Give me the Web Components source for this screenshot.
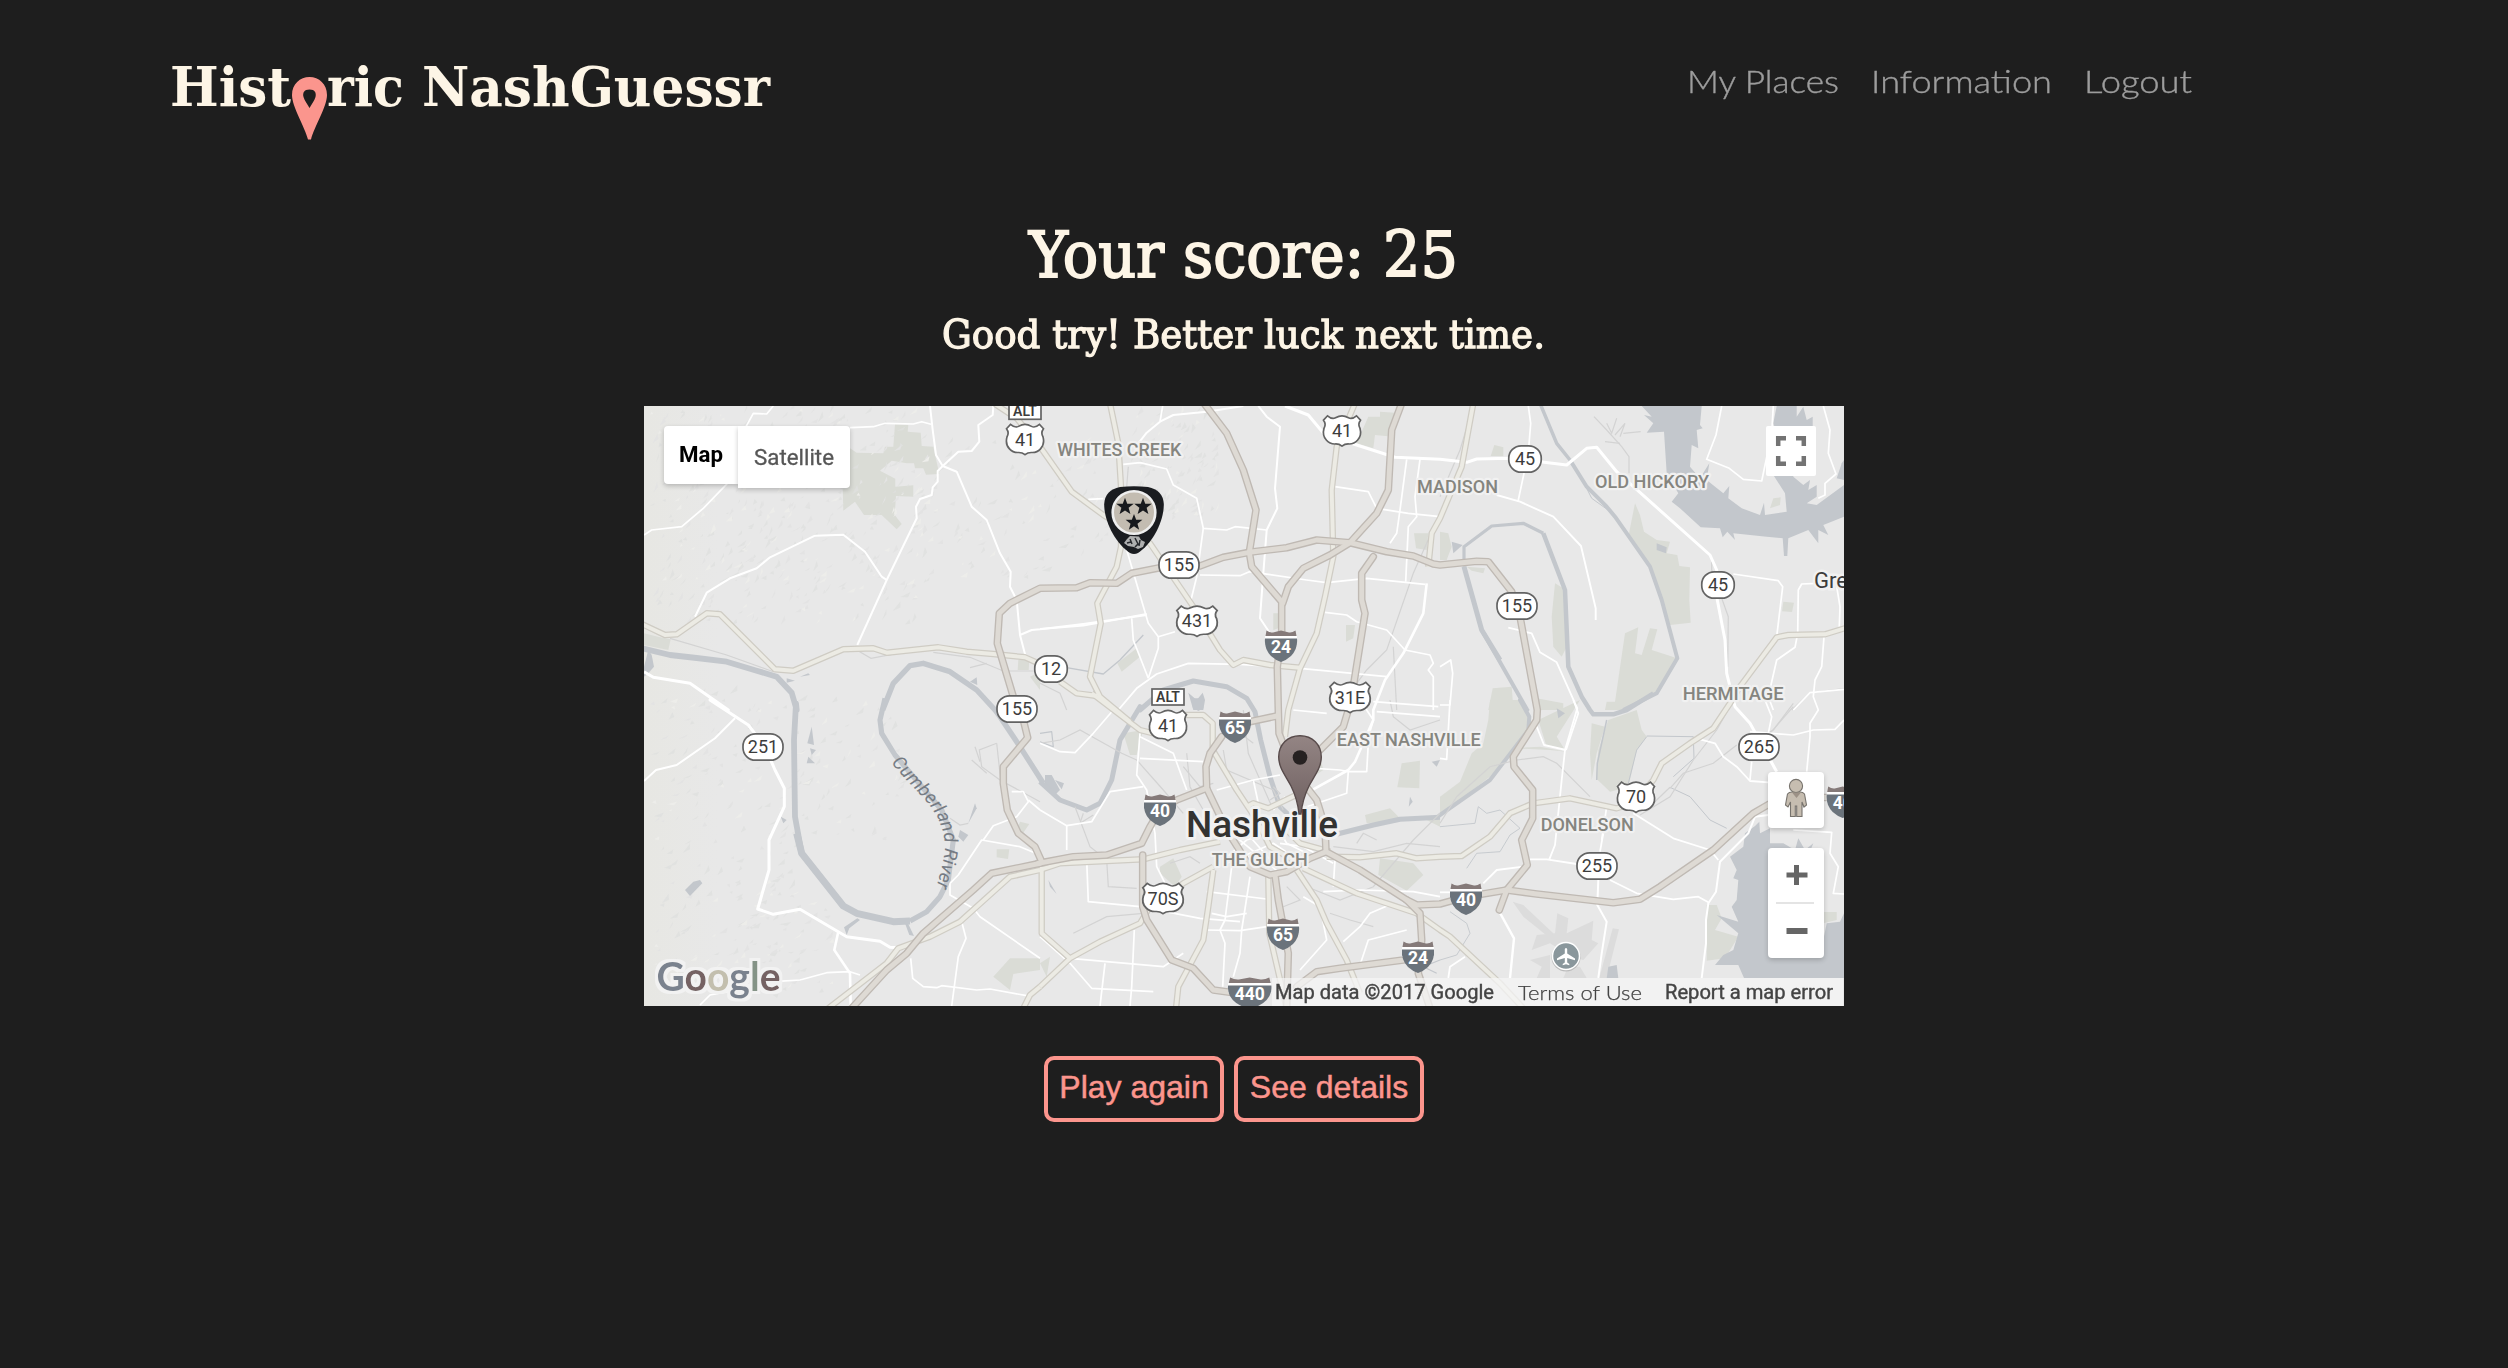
<!DOCTYPE html>
<html lang="en">
<head>
<meta charset="utf-8">
<title>Historic NashGuessr</title>
<style>
html,body{margin:0;background:#1e1e1e;}
body{height:1368px;overflow:hidden;font-family:Roboto,"Liberation Sans",sans-serif;}
</style>
</head>
<body>
<nash-app></nash-app>
<script>
/* ---------- text line scaled horizontally to a given measure ---------- */
class FitLine extends HTMLElement{
  connectedCallback(){
    const w=+this.getAttribute('w');
    const r=this.attachShadow({mode:'open'});
    r.innerHTML=`<style>:host{display:block;width:${w}px;white-space:nowrap;flex:none}span{display:inline-block;transform-origin:0 50%}</style><span><slot></slot></span>`;
    const s=r.querySelector('span');
    const m=s.getBoundingClientRect().width;
    if(m)s.style.transform=`scaleX(${w/m})`;
  }
}

class SiteLogo extends HTMLElement{
  connectedCallback(){
    this.attachShadow({mode:'open'}).innerHTML=`<style>
    :host{display:flex;height:90px;color:#fdf5e6;font:700 54.500px/60px "DejaVu Serif",serif}
    svg{flex:none;width:35px;height:63px;margin:20px 0 0 1px}
    .gap{margin-left:18px}</style>
    <fit-line w="121">Hist</fit-line>
    <svg viewBox="0 0 35 63"><path fill="#fb958d" fill-rule="evenodd" d="M17.5 0C27 0 35 7 35 18C35 30 22 50 19 62.500H16C13 50 0 30 0 18C0 7 8 0 17.500 0ZM17.500 12.500C12 12.500 10.500 16 11.500 20C12.500 24 15.500 27 17.500 31C19.500 27 22.500 24 23.500 20C24.500 16 23 12.500 17.500 12.500Z"/></svg>
    <fit-line w="77">ric</fit-line><fit-line class="gap" w="348">NashGuessr</fit-line>`;
  }
}

class SiteNav extends HTMLElement{
  connectedCallback(){
    this.attachShadow({mode:'open'}).innerHTML=`<style>
    :host{display:flex;gap:32px;color:#9d9d9d;font:300 32px/40px Lato,sans-serif;margin-top:4px;-webkit-text-stroke:.4px #9d9d9d}</style>
    <fit-line w="152">My Places</fit-line><fit-line w="181">Information</fit-line><fit-line w="108">Logout</fit-line>`;
  }
}

class ActionButton extends HTMLElement{
  connectedCallback(){
    this.attachShadow({mode:'open'}).innerHTML=`<style>
    :host{display:block}
    button{display:block;width:100%;height:66px;margin:0;padding:0 0 5px;border:4px solid #fc958d;border-radius:10px;background:transparent;color:#fc958d;font:400 32px/50px "Liberation Sans",sans-serif;-webkit-text-stroke:.5px #fc958d}</style>
    <button><slot></slot></button>`;
  }
}

/* ---------- map drawing ---------- */
/* Survey sheets: points are given in thirds of a pixel, relative to a sheet origin. */
const SHEET={A:[640,400],B:[1040,400],C:[1440,400],D:[640,700],E:[1040,700],F:[1440,700]};
function pts(s){
  let o=SHEET.A;const out=[];
  for(const t of s.trim().split(/\s+/)){
    if(SHEET[t]){o=SHEET[t];continue}
    const [x,y]=t.split(',').map(Number);
    out.push([+(o[0]+x/3).toFixed(1),+(o[1]+y/3).toFixed(1)]);
  }
  return out;
}
const dOf=(s,close)=>'M'+pts(s).map(p=>p.join(' ')).join('L')+(close?'Z':'');
const at=s=>pts(s)[0];

const PARKS=[
'A 765,73 805,75 803,95 842,98 845,138 880,140 898,222 858,224 850,205 825,205 822,190 800,190 755,182 720,212 766,236 766,260 820,256 820,290 768,288 764,345 785,372 770,388 725,345 672,345 645,305 610,332 608,260 628,225 630,145 650,158 730,160 735,140 760,140',
'A 12,700 60,712 92,718 85,750 12,735',
'B 985,50 1020,50 1020,35 1065,38 1060,110 1005,105 1000,145 950,130',
'B 918,675 945,675 940,715 918,725',
'B 700,640 715,640 715,685 700,690',
'B 232,790 290,745 300,770 245,815','B 1122,400 1165,400 1160,450 1128,445',
'C 163,135 190,142 190,168 152,168','C 0,395 25,400 35,440 20,480 0,480',
'C 585,310 600,345 612,395 650,420 690,425 680,460 712,465 718,498 750,502 748,600 752,668 690,675 660,590 632,498 565,410',
'C 555,700 595,682 585,760 605,765 630,685 652,688 635,750 712,775 650,880 550,930 495,930 500,905 525,905',
'C 345,550 370,565 380,740 365,770 340,740 335,650','C 80,500 135,505 130,520 95,512',
'C 158,865 215,860 218,900 270,930 145,930','C 290,895 370,910 370,930 290,930',
'C 1000,295 1022,292 1020,315 990,325','C 1030,605 1062,608 1056,636 1026,634',
'F 150,0 240,0 265,45 262,90 215,165 150,230 0,345 0,290 60,245 95,160 130,130 145,60',
'F 295,60 420,0 350,110 375,150 320,140','F 215,145 300,140 380,155 330,150',
'F 505,60 590,30 605,90 620,110 590,150 568,250 540,268 510,275 468,235 475,150',
'F 455,70 495,80 470,160 455,240 450,160',
'F 800,615 830,615 845,655 825,690 895,710 855,775 800,782',
'F 1150,636 1190,636 1190,660 1150,670','E 1085,190 1140,182 1138,265 1072,262','E 1020,475 1120,490 1150,525 1100,572 1015,525','E 360,500 400,475 425,530 405,560 360,520','E 975,345 1050,325 1085,360 980,370','E 250,100 310,90 290,165 270,165','E 1160,360 1200,345 1200,380','E 810,190 845,190 850,210 820,230',
'D 1070,448 1108,448 1104,477 1070,472','D 1140,365 1168,372 1150,398 1130,390',
'D 1110,775 1200,775 1200,810 1120,822 1110,870 1060,830','A 1135,780 1168,780 1166,810 1133,810','A 1170,830 1200,815 1200,870','E 0,790 30,770 20,830'
];
const LAKES=[
'C 605,18 785,18 780,75 788,85 770,90 775,145 755,135 750,200 780,235 808,190 800,240 850,280 868,258 865,295 905,325 960,345 972,308 975,345 1040,335 1035,280 1000,225 1005,200 1010,100 1000,70 1010,18 1070,18 1070,50 1090,20 1100,60 1118,50 1118,78 1060,80 1060,230 1090,255 1110,240 1105,270 1130,255 1130,290 1100,310 1130,315 1212,255 1212,350 1150,375 1165,405 1135,390 1135,430 1105,390 1045,415 1042,468 1032,468 1028,415 980,410 880,400 885,420 862,395 848,412 840,385 782,382 720,325 695,305 715,280 680,220 672,95 620,98 640,70 612,45 635,50',
'C 1205,190 1212,180 1212,240 1190,235',
'F 945,378 958,365 960,400 990,385 990,460 1000,560 1050,650 1150,720 1160,670 1200,665 1212,640 1212,834 912,834 895,795 825,795 850,765 880,750 895,700 830,645 895,665 875,620 890,600 895,540 880,535 890,510 870,470 910,440 915,400',
'F 990,430 1030,430 1065,450 1075,415 1095,450 1120,430 1110,455 990,470',
'C 650,430 680,442 678,460 650,450','C 35,425 68,435 40,460',
'D 515,80 522,135 502,130','D 510,145 528,150 515,165','D 505,170 525,190 500,190','D 960,390 985,405 970,425 955,410',
'D 135,570 160,545 180,540 187,550 150,588','D 422,350 440,360 430,370','D 1005,310 1010,325 985,370','D 612,682 652,655 660,660 628,685 620,705','D 795,670 805,672 822,708 808,705',
'A 25,750 35,765 42,800 25,820 12,830 12,800','A 440,835 465,842 440,848','A 480,830 505,820 510,825','A 1010,832 1012,855 990,845',
'E 455,-5 490,-5 490,25 475,33 458,22','B 445,878 470,900 488,878 495,900 490,930 460,930','E 15,225 35,225 60,270 40,290 15,255','E 45,240 72,250 65,268','E 1110,290 1118,305 1106,320','E 25,540 50,582 30,560',
'F 505,800 530,795 535,834 500,834','F 350,25 375,40 355,55','E 1175,185 1200,180 1190,200'
];
const RIVERS=[
[5.8,'A 5,745 90,765 170,774 260,785 350,812 410,830 455,878 470,930 D 468,10 462,120 465,350 485,460 610,618'],
[7,'D 470,400 485,460 610,618 650,640 760,665 810,663'],
[5.2,'D 810,663 860,635 900,590 925,540 940,420 905,330 765,165 725,100 720,60 735,-5'],
[5.4,'A 728,930 760,850 810,797 850,790 930,815 1010,870 1065,930 D 1080,50 1140,140 1210,250'],
[5,'E 0,245 60,300 140,330 180,310 215,240 240,120 300,20 B 300,930 370,870 460,843 560,860 620,895 645,935 E 662,120 690,230 720,320 800,395 880,405 1000,375 1080,358 1200,352'],
[4,'E 1190,354 F 0,345 150,240 265,90 268,50 240,0 C 262,930 125,690'],
[5,'C 180,780 125,690 72,500'],[3.2,'C 72,500 72,440 155,378 250,370 310,400'],
[4.5,'C 310,400 375,570 385,800 425,890 450,930 F 460,43 520,43 560,30 640,-20'],
[4,'C 550,930 650,880 712,775 665,600 630,500 525,350 500,320 440,260 390,180'],[3.5,'C 390,180 350,130 300,10'],
[1,'C 525,345 455,295 435,255'],[1.3,'B 80,803 190,822 240,780 310,705'],[1,'F 620,108 760,110 762,175 700,230'],[1,'F 690,262 750,290 810,360 860,385'],[1.5,'F 500,60 472,190 470,240'],[1,'F 565,250 590,150 620,110'],
[.9,'F 80,505 110,460 180,455 210,405 240,385 180,330 140,340 115,320 105,370 0,380'],[.9,'F 30,635 80,670 90,700 50,765 0,780'],[1.2,'E 0,125 40,140 35,95 0,100'],[1.2,'E 1200,780 1150,800 1190,820']
];
const GREY=[
'A 90,715 260,765 400,815','A 650,750 693,775 800,755','A 880,757 990,772 1090,813 1200,813','A 990,803 1040,790',
'D 1070,130 1018,150 1025,200 1080,240 1200,305','D 1070,130 1082,240','D 995,180 1040,220','D 1005,140 1020,185','D 930,355 960,375 985,370',
'B 265,200 260,260','B 1200,340 1120,520 1040,750 980,810 950,850','C 100,18 60,150 0,290','C 815,485 815,510 865,650 863,800',
'C 462,50 500,90 545,140 567,170 567,220','C 500,70 515,100 530,55','C 525,105 555,70 540,110','C 550,100 602,95','C 495,125 540,130',
'E 0,130 60,120 120,90 245,160 290,180','E 290,180 370,270 430,340','E 105,320 150,440 200,480 205,560 290,565','E 550,150 560,210 700,270 730,330','E 610,30 625,160 700,330','E 880,440 1000,455 1100,430 1200,440','E 950,430 970,400 1010,420','E 870,640 930,660 1000,680','E 740,560 780,600 730,620','E 800,560 900,600 1000,560 1120,420 1200,340','E 100,700 200,650 310,640','E 1050,0 1060,50 1110,90 1200,60','E 430,200 480,260 520,250',
'F 230,180 310,170 350,190 450,290','F 0,370 50,290 150,200 230,180','F 690,265 730,220 820,190 890,135','F 600,345 690,290 760,180 830,90 870,20','F 690,262 640,310','F 1060,20 990,100','B 1060,740 1070,930','B 0,850 60,880 80,930','C 1055,930 1110,878 1212,866','E 390,490 450,470 480,490','E 130,340 120,370 160,345','E 440,160 450,260 490,330','E 700,260 720,280 690,300','E 640,130 600,100','F 1060,10 1000,90 960,110'
];
const STREETS=[
[1.7,'A 12,405 35,390 125,380 190,325 330,180 310,95 340,40 380,42 400,18'],
[1.7,'A 630,83 700,80 735,70 820,72 845,65 873,73'],
[2,'A 870,18 878,90 888,165 908,198 950,215 995,320 1040,360 1080,460 1112,515 1110,560 1130,600 1140,705 1157,770'],
[2,'A 1060,18 1058,45 1015,75 1018,125 995,153 955,155 908,198 893,213 893,245 878,262 875,285 840,297 828,320 830,355 740,540 652,735'],
[2,'A 165,650 200,578 270,535 350,505 390,472 525,407 610,404 675,455 725,530 740,540'],
[2,'A 1140,705 1175,690 1200,688 B 130,672 320,645'],
[3,'A 12,815 40,832 150,850 265,930 D 210,0 325,75 375,140 405,210 433,265 433,320 387,420 387,510 353,627 400,643 480,628 620,710 720,724 750,742 800,745'],
[2,'D 12,243 48,210 110,195 225,115 285,55'],[2.6,'D 595,695 583,750 630,820 632,918'],[1.7,'D 180,915 210,885 290,870 400,845 480,840 560,818 630,815 660,825'],
[1.7,'D 930,550 930,585 1000,625 1020,650 1200,775'],[1.7,'D 965,665 978,715 955,770 935,918'],[1.7,'D 812,775 818,835 850,860 890,863 905,857 1010,870 1050,867 1160,887'],
[1.7,'D 930,550 955,525 1025,420 1140,440 1200,465'],[1.7,'D 1030,420 1060,377 1130,350 1165,305 1150,275 1115,275'],[1.7,'D 1165,300 1200,330'],
[2,'B 295,130 320,98 360,65 400,45 500,35 610,18'],[1.7,'B 360,65 368,18'],
[2,'B 655,18 680,50 720,80 705,265 712,325 680,390 670,520 660,655 690,700'],[1.7,'B 250,193 300,188 380,207 400,255 470,295 490,385 560,390 585,380 680,390'],[1.7,'B 490,385 470,530 453,600'],
[1.7,'B 145,298 190,296'],[1.7,'B 480,525 600,527 628,515 800,540 860,548 980,535 1155,553'],
[1.7,'B 260,450 325,670 355,710 355,745 325,835'],[1.7,'B 325,835 280,720 275,655'],[1.7,'B 355,710 405,695'],[1.8,'B 0,687 130,677 320,642'],
[1.8,'B 235,930 290,865 350,822 445,790 600,793 780,805 1040,830'],
[3,'B 735,18 805,45 855,105 950,135 1065,172 1200,178 C 80,187 110,177 210,175 300,185 380,195 440,145 470,142 530,215 810,465 830,510 832,600 855,720 860,820 885,920 F 930,70 1010,215'],
[1.7,'B 885,260 985,275 1010,325 1105,340 1200,350'],[1.7,'B 1100,178 1080,330'],[1.7,'B 1140,178 1125,290 1130,350 1105,380 1097,545'],[1.7,'B 1080,330 1070,400 1050,430'],
[1.7,'B 855,637 920,645 950,665 1040,690 1095,750 1170,765 1180,790 1165,810 1180,830 1180,930'],
[2.6,'B 1160,550 1150,640 1090,760 1035,840 1000,930 E 1000,60 945,185 925,210 820,268'],
[1.7,'B 1000,905 1195,920'],[1.7,'C 0,800 32,780 38,820 30,915 0,915'],[1.7,'C 265,18 272,70 265,160 235,300 235,305'],[1.9,'C 170,285 240,305 340,350 423,438 467,625 467,660'],
[1.8,'C 205,683 275,700 300,757 350,787 412,925 F 375,150 365,240 345,435 328,478'],[1.8,'F 290,80 312,135 378,150'],
[1.7,'C 845,18 828,105 800,178 868,205 910,238 965,243 995,100 1000,18'],[1.7,'C 1150,18 1170,90 1165,160 1188,222 1155,250 1155,285 1135,295'],
[1.7,'C 880,522 1015,542 1028,560 1010,710'],[1.7,'C 1130,550 1085,552 1075,570 1073,700 1065,742 1010,780 985,890 1000,930'],[1.7,'C 1190,560 1200,620 1198,680'],[1.7,'C 1152,710 1145,800 1125,840 1120,890 1135,930 F 1110,70 1110,110 1100,215'],[1.7,'C 1060,930 1110,878 1212,868'],
[1.7,'F 1212,60 1185,88 1120,90 1060,105 930,95'],[1.8,'F 780,118 825,130 850,170 890,200 930,243 985,247'],[1.7,'F 935,185 930,240'],[1.7,'F 975,0 995,50 985,100'],
[2,'F 985,345 945,350 925,400 840,485 828,575 805,610 798,660 798,730 785,834'],[1.8,'F 580,340 700,415 810,450 835,480'],[2,'F 475,540 472,615 500,665 485,760 475,834'],[1.8,'F 490,400 480,455'],[1.8,'F 510,540 590,580 700,598 775,590 805,607'],[1.8,'F 410,492 320,478 270,478 250,500 170,510 130,550'],[1.8,'F 0,577 60,577'],[2.4,'F 178,635 222,715 210,834'],[1.8,'F 25,834 30,800 75,770'],[1.7,'F 500,320 485,420'],[1.7,'F 1060,390 1175,397 1170,460 1195,500 1180,580 1212,582'],
[1.7,'F 0,175 20,178 30,0'],[1.8,'F 400,0 415,40 378,150'],
[1.7,'E 0,130 60,155 105,158 160,100 220,30'],[1.7,'E 300,100 290,225 320,270 345,400 350,500 380,560'],[1.7,'E 0,330 80,377 155,365 210,275 310,260'],[1.7,'E 80,377 80,450'],[1.7,'E 300,110 400,160 440,270'],[1.7,'E 300,175 490,185'],[1.7,'E 140,480 145,605 300,620 480,655 600,665'],
[1.7,'E 283,690 275,860 270,918'],[1.7,'E 90,775 200,785 370,800 430,760'],[1.7,'E 195,790 180,918'],[1.7,'E 0,710 90,790 155,865 340,875'],
[1.7,'E 530,270 640,240 720,225'],[1.7,'E 640,240 655,310'],[1.7,'E 500,575 680,597'],[1.7,'E 575,500 555,660 540,690 555,730 548,860'],[1.7,'E 630,530 605,690 600,760 580,830'],[1.7,'E 500,690 600,692 680,680'],[1.7,'E 760,30 860,40'],[1.7,'E 745,200 900,210 925,215 980,215 985,130'],[1.7,'E 925,215 920,280 800,320'],[1.7,'E 1010,35 1200,50'],
[1.7,'E 850,575 960,570 1120,575 1200,590'],[1.7,'E 885,480 880,560'],[1.7,'E 780,810 860,720 840,620 790,590'],[1.7,'E 910,725 960,680 990,640 1060,610'],[1.7,'E 960,795 985,720 1100,690'],[1.7,'E 550,480 620,420 680,400'],[1.7,'E 560,490 700,430 760,470'],[1.7,'E 600,440 650,500'],[1.7,'E 630,410 700,490'],[1.7,'E 575,400 720,520'],[1.7,'E 720,430 790,440 880,490'],[1.7,'E 700,360 740,430 800,460'],[1.7,'E 735,290 700,330'],[1.7,'E 515,640 560,650 620,640'],[1.7,'E 960,0 1000,60 980,130']
];
const ARTERIAL=[
'A 5,672 75,705 110,703 200,640 240,643 405,808 460,812 610,748 700,745 740,758 895,742 980,755 1060,762 1155,772 1200,792',
'B 60,845 110,880 172,888','B 210,10 235,130 243,260 243,440 230,500 172,610 182,670 150,830 180,890 270,965',
'A 1065,12 1130,55 1200,140 B 95,275 190,345 330,430 460,620 540,750 580,795 610,780 690,795 780,803',
'B 945,10 890,140 875,270 880,470 855,590 830,700 780,805 745,930 E 735,110',
'C 100,10 65,200 0,355 B 1200,355 1175,400 1165,500','E 155,-20 300,90 340,100',
'E 430,45 490,45 518,70 518,150 590,270 650,360 690,440 760,480','E 0,510 60,490 310,478 420,450 540,425','E 5,500 5,700 90,775',
'D 565,925 740,790 775,745 870,710 960,665 1110,530 1200,510','E 0,860 90,775 180,725 300,670 330,620 430,550 520,500',
'E 520,510 505,620 490,720 415,860 408,925','E 685,530 688,700 740,925','E 770,510 830,600 860,670 920,780 960,880','E 790,505 950,580 1130,640 1200,690 F 30,710 180,850 250,925',
'E 860,470 960,472 1070,460 1130,475 1200,470 F 65,468 150,410 210,340 280,310 390,295 530,325 580,310 640,240 665,190 750,130 820,85 870,10 C 900,860 1010,712 1045,705 1155,703 1220,683',
'E 620,320 640,310 685,325 800,270','D 1150,925 1170,885 1200,860','E 740,390 780,430 870,455'
];
const HIGHWAY=[
'D 1150,60 1163,113 1090,200 1090,250 1102,330 1135,400 1185,440 1203,480','D 1200,490 1055,520 1000,570 850,700 800,760 740,810 635,925',
'A 1120,890 1090,790 1072,730 1078,640 1110,610 1200,565 B 110,563 150,548 230,550 275,520 360,503 480,498 550,472 628,457 740,443 830,420 930,428 1040,455 1120,468 1180,492 1200,495 C 110,484 145,485 215,575 240,650 292,930 F 290,60 220,170 222,200 278,270 278,355 245,420 262,495 200,570 178,630',
'B 492,10 560,100 610,210 648,330 628,457 635,500 725,605 725,700 712,800 715,930 E 717,100 760,210 830,300 855,380 858,455 960,510 1100,600 1140,640 1145,720 1135,820 1170,925',
'B 1085,10 1055,90 1045,270 1010,340 930,428 870,465 790,505 745,560 728,610','E 858,455 810,475 740,515 690,525 630,500 560,390 500,265 498,200 510,160 545,110',
'E 630,65 710,48','E 500,265 410,300 360,330 330,380 305,430 200,465 100,470 -5,490','E 308,465 308,620 320,660 395,780 460,805 520,870 580,878','E 705,525 715,600 730,680 745,760 740,925',
'E 1140,770 1090,780 900,805 830,815 770,860','E 1100,600 1130,615 1200,612 F 80,590 200,570 290,582 520,608 600,598 660,560 820,450 940,340 1000,305 1100,290 1220,295',
'B 1000,470 965,520 965,600 975,640 940,860','E 925,30 910,80 840,150 780,180'
];
const AIRPORT=['F 352,640 385,655 380,700 460,662 455,720 475,730 430,780 395,770 330,730 275,750 290,705 345,700','F 218,605 250,615 340,700 330,715 250,650','F 270,780 330,765 330,834 290,834 305,800','F 518,685 537,688 500,834 478,834','F 370,834 385,800 420,800 440,834'];

const US={
 w38:'M-14.500-15.500Q-10-11.500-6.500-13.500Q-3-15.500 0-15.500Q3-15.500 6.500-13.500Q10-11.500 14.500-15.500L18.500-11Q15.500-7 18-2.500Q20 5 15.500 10Q12 14 7 13.800Q3 13.500 0 16Q-3 13.500-7 13.800Q-12 14-15.500 10Q-20 5-18-2.500Q-15.500-7-18.500-11Z'};
function us(p,t){const[x,y]=at(p);const k=t.length>2?1.09:1;
 return `<g transform="translate(${x} ${y})"><path d="${US.w38}" transform="scale(${k} .96)" fill="#fff" stroke="#636363" stroke-width="1.7"/><text class="num" y="6.300">${t}</text></g>`}
function st(p,t){const[x,y]=at(p);const w=t.length>2?40:32.5;
 return `<g transform="translate(${x} ${y})"><rect x="${-w/2}" y="-13.200" width="${w}" height="26.400" rx="12.500" fill="#fff" stroke="#636363" stroke-width="1.7"/><text class="num" y="6.300">${t}</text></g>`}
function ih(p,t){const[x,y]=at(p);const k=t.length>2?1.35:1;
 return `<g transform="translate(${x} ${y})"><g transform="scale(${k} 1)"><path fill="#fff" d="M-16-10H16V0H-16Z"/><path fill="#6b737b" d="M-16-7.500H16Q17 3 10 10Q5 14.500 0 16Q-5 14.500-10 10Q-17 3-16-7.500Z"/><path fill="#857a79" d="M-14.500-15.500Q-11-13-8-13.500Q-4-14.500 0-15.500Q4-14.500 8-13.500Q11-13 14.500-15.500L15.500-10H-15.500Z"/></g><text class="ih" y="7">${t}</text></g>`}
function alt(p){const[x,y]=at(p);return `<g transform="translate(${x} ${y})"><rect x="-16" y="-8" width="32" height="16" fill="#fff" stroke="#636363" stroke-width="1.700"/><text class="alt" y="5">ALT</text></g>`}
function label(p,t,w){const[x,y]=at(p);return `<text class="lab" x="${x}" y="${y}" textLength="${w}" lengthAdjust="spacingAndGlyphs">${t}</text>`}

function hills(){
  let s=11;const r=()=>(s=(s*16807)%2147483647)/2147483647;let a='',b='',c='';
  const zone=(n,x0,x1,y0,y1,lean)=>{for(let i=0;i<n;i++){
    const x=x0+r()*(x1-x0),y=y0+r()*(y1-y0),l=3+r()*9,w=1+r()*3,t=lean+r()*.9-.45;
    const dx=Math.cos(t)*l,dy=Math.sin(t)*l;
    const p=`M${x.toFixed(1)} ${y.toFixed(1)}l${dx.toFixed(1)} ${dy.toFixed(1)}l${(-dy/l*w-dx*.4).toFixed(1)} ${(dx/l*w-dy*.4).toFixed(1)}Z`;
    const q=r(); if(q<.45)a+=p;else if(q<.75)b+=p;else c+=p;}};
  zone(430,650,925,410,625,-.9);zone(90,925,1105,440,580,-.8);zone(110,1130,1215,410,520,-1);
  zone(210,650,800,690,1000,-.7);zone(60,790,900,700,840,-.8);zone(40,720,830,880,1000,-.6);
  return `<path d="${a}" fill="#dfe0df" opacity=".8"/><path d="${b}" fill="#e3e3e3"/><path d="${c}" fill="#ededea"/>`;
}
const many=(list,f)=>list.map(f).join('');

class MapCanvas extends HTMLElement{
  connectedCallback(){
    const plane=at('F 378,768'), pin=at('E 780,105'), hp=at('B 282,258');
    const star=(x,y,k)=>`<path transform="translate(${x} ${y}) scale(${k})" fill="#17191d" d="M0-7L1.800-2.300L7-2.200L2.900 1L4.300 6L0 3.200L-4.300 6L-2.900 1L-7-2.200L-1.800-2.300Z"/>`;
    this.attachShadow({mode:'open'}).innerHTML=`<style>
    :host{display:block;width:1200px;height:600px}
    svg{display:block}
    text{font-family:Roboto,sans-serif}
    .num{font-size:18px;fill:#3c3c3c;text-anchor:middle}
    .ih{font-size:17.500px;font-weight:700;fill:#fff;text-anchor:middle}
    .alt{font-size:14px;font-weight:600;fill:#3c3c3c;text-anchor:middle}
    .lab{font-size:18px;font-weight:500;fill:#85857f;paint-order:stroke;stroke:#f1f1f1;stroke-width:4.500px;stroke-linejoin:round}
    .city{font-size:37px;font-weight:500;fill:#333331;paint-order:stroke;stroke:#f1f1f1;stroke-width:6px;stroke-linejoin:round}
    .town{font-size:22px;fill:#3c3c3c;paint-order:stroke;stroke:#f1f1f1;stroke-width:5px}
    .riv{font-size:18.500px;font-style:italic;fill:#757b83}
    .goo{font-family:Lato,sans-serif;font-size:40px;font-weight:700;filter:url(#halo)}
    </style>
    <svg width="1200" height="600" viewBox="644 406 1200 600">
    <defs><linearGradient id="pg" x1="0" y1="0" x2="0" y2="1"><stop offset="0" stop-color="#948584"/><stop offset="1" stop-color="#6e6060"/></linearGradient>
    <linearGradient id="west"><stop offset="0" stop-color="#e7e7e3"/><stop offset="1" stop-color="#e8e8e8"/></linearGradient>
    <filter id="halo" x="-10%" y="-20%" width="120%" height="140%"><feMorphology in="SourceAlpha" operator="dilate" radius="3" result="d"/><feFlood flood-color="#f2f2f2"/><feComposite in2="d" operator="in"/><feMerge><feMergeNode/><feMergeNode in="SourceGraphic"/></feMerge></filter>
    <path id="rp" d="${dOf('D 753,188 796,237 828,270 863,308 893,352 910,395 916,440 908,490 887,570')}"/></defs>
    <rect x="644" y="406" width="1200" height="600" fill="#e8e8e8"/>
    <rect x="644" y="406" width="75" height="600" fill="url(#west)"/>
    ${many(PARKS,p=>`<path fill="#dadcd6" d="${dOf(p,1)}"/>`)}
    ${hills()}
    ${many(AIRPORT,p=>`<path fill="#dcdcdc" d="${dOf(p,1)}"/>`)}
    <g fill="#c3c7cc">${many(LAKES,p=>`<path d="${dOf(p,1)}"/>`)}</g>
    <g fill="none" stroke="#c3c7cc" stroke-linejoin="round">${many(RIVERS,r=>`<path stroke-width="${r[0]}" d="${dOf(r[1])}"/>`)}</g>
    <g fill="none" stroke="#d3d3d3" stroke-width="1.200">${many(GREY,p=>`<path d="${dOf(p)}"/>`)}</g>
    <g fill="none" stroke="#fff" stroke-linejoin="round">${many(STREETS,r=>`<path stroke-width="${r[0]}" d="${dOf(r[1])}"/>`)}</g>
    <g fill="none" stroke="#cfccc4" stroke-width="6.400" stroke-linejoin="round">${many(ARTERIAL,p=>`<path d="${dOf(p)}"/>`)}</g>
    <g fill="none" stroke="#ecebe4" stroke-width="3.900" stroke-linejoin="round">${many(ARTERIAL,p=>`<path d="${dOf(p)}"/>`)}</g>
    <g fill="none" stroke="#bfb9b3" stroke-width="7.600" stroke-linejoin="round" stroke-linecap="round">${many(HIGHWAY,p=>`<path d="${dOf(p)}"/>`)}</g>
    <g fill="none" stroke="#dedad4" stroke-width="4.900" stroke-linejoin="round" stroke-linecap="round">${many(HIGHWAY,p=>`<path d="${dOf(p)}"/>`)}</g>
    ${alt('A 1155,34')}${us('A 1155,118','41')}${us('B 906,92','41')}${us('B 471,663','431')}${alt('B 384,891')}${us('E 384,76','41')}
    ${us('B 930,892','31E')}${us('E 369,595','70S')}${us('F 588,291','70')}
    ${st('B 417,495','155')}${st('B 33,807','12')}${st('A 1131,927','155')}${st('D 369,141','251')}${st('C 255,177','45')}${st('C 834,555','45')}${st('C 231,618','155')}${st('F 957,141','265')}${st('F 471,498','255')}
    ${ih('B 723,738','24')}${ih('E 585,81','65')}${ih('E 360,330','40')}${ih('E 729,702','65')}${ih('E 1134,771','24')}${ih('F 78,597','40')}${ih('E 629,879','440')}${ih('F 1208,306','40')}
    ${label('B 52,168','WHITES CREEK',124)}${label('B 1131,279','MADISON',81)}${label('C 465,265','OLD HICKORY',114)}${label('C 728,901','HERMITAGE',101)}${label('F 302,394','DONELSON',93)}${label('E 890,138','EAST NASHVILLE',144)}${label('E 515,498','THE GULCH',96)}
    <text class="town" x="1814" y="588">Gre</text>
    <text class="city" x="1186" y="837" textLength="152" lengthAdjust="spacingAndGlyphs">Nashville</text>
    <text class="riv"><textPath href="#rp" textLength="144">Cumberland River</textPath></text>
    <g transform="translate(${plane})"><circle r="14.500" fill="#bbb" cy="1"/><circle r="13.500" fill="#8a979c" stroke="#fff" stroke-width="1.500"/><path fill="#fff" d="M-1.200-7Q0-9 1.200-7V-2.500L9 2.500V4.200L1.200 2V6.500L3.300 8V9.200L0 8.300L-3.300 9.200V8L-1.200 6.500V2L-9 4.200V2.500L-1.200-2.500Z"/></g>
    <g transform="translate(${hp})"><path fill="#1a1c20" d="M-14 1Q0-.5 14 1Q29 4 29.800 18C30 36 18 58 4 67Q0 69-4 67C-18 58-30 36-29.800 18Q-29 4-14 1Z"/><circle cy="26.500" r="21.300" fill="#c3bcb1" stroke="#efefef" stroke-width="2.600"/>${star(-9,20.5,1.25)}${star(9,20.5,1.25)}${star(0,36.5,1.2)}
      <path fill="#c9c9c9" opacity=".85" d="M-4 50L5 50.500L7 54L11 56L9 61L4 63L0 61L-6 60L-10 57L-7 53Z"/><path stroke="#26282c" stroke-width="1.500" fill="none" d="M-4 53L-2 58M1 52L4 58L1 61M6 54L5 60M-7 57L-3 56"/></g>
    <g transform="translate(${pin})"><path fill="url(#pg)" stroke="#574a4a" stroke-width="1.400" d="M0 .7C12.500.7 21.300 10 21.300 22C21.300 33 14 41 9 51C4 61 2 69 1 79H-1C-2 69-4 61-9 51C-14 41-21.300 33-21.300 22C-21.300 10-12.500.7 0 .7Z"/><circle cy="22.500" r="7.300" fill="#262121"/></g>
    <text class="goo" x="656.500" y="990.500" textLength="124" lengthAdjust="spacingAndGlyphs"><tspan fill="#7a828e">G</tspan><tspan fill="#756263">o</tspan><tspan fill="#c3bfae">o</tspan><tspan fill="#7a828e">g</tspan><tspan fill="#849386">l</tspan><tspan fill="#756263">e</tspan></text>
    </svg>`;
  }
}

class MapType extends HTMLElement{
  connectedCallback(){
    this.attachShadow({mode:'open'}).innerHTML=`<style>
    :host{display:flex;align-items:flex-start;font:500 22px/26px Roboto,sans-serif;color:#565656}
    div{box-sizing:border-box;background:#fff;box-shadow:0 2px 5px rgba(0,0,0,.22)}
    .m{width:74px;height:58px;padding:16px 0 0 15px;border-radius:4px 0 0 4px;color:#000;font-weight:700}
    .s{width:112px;height:62px;padding:19px 0 0 16px;border-radius:0 4px 4px 0;font-weight:400;-webkit-text-stroke:.3px #565656}</style>
    <div class="m"><fit-line w="44">Map</fit-line></div><div class="s"><fit-line w="80">Satellite</fit-line></div>`;
  }
}

class MapTools extends HTMLElement{
  connectedCallback(){
    this.attachShadow({mode:'open'}).innerHTML=`<style>
    :host{display:flex;flex-direction:column;gap:20px}
    .b{width:56px;background:#fff;border-radius:4px;box-shadow:0 2px 5px rgba(0,0,0,.2)}
    svg{display:block}</style>
    <div class="b"><svg width="56" height="56" viewBox="0 0 56 56"><g fill="#c6bdb0" stroke="#77736d" stroke-width="1.100"><path d="M19.500 22Q21 20 24 20H32Q35 20 36.500 22L38.500 33L36 35L34 30V44.500H28.700V34H27.300V44.500H22.500V30L20 35L17.500 33Z"/><circle cx="28" cy="14" r="6.600"/></g><path fill="#9c9186" d="M24 20.500H33L28.500 26Z"/></svg></div>
    <div class="b"><svg width="56" height="110" viewBox="0 0 56 110"><path fill="#666" d="M26 17H31V24.500H39.500V29.500H31V37H26V29.500H18.500V24.500H26ZM18.500 80H39.500V86H18.500Z"/><path fill="#e4e4e4" d="M8 54H46V56H8Z"/></svg></div>`;
  }
}

class MapCredits extends HTMLElement{
  connectedCallback(){
    this.attachShadow({mode:'open'}).innerHTML=`<style>
    :host{display:flex;height:28px;background:rgba(245,245,245,.72);color:#444;font:400 20px/28px Roboto,sans-serif;padding-left:3px;width:571px;box-sizing:border-box}
    .r{-webkit-text-stroke:.4px #444}
    .t{font-family:Lato,sans-serif;font-weight:300;margin-left:24px;-webkit-text-stroke:.25px #444}
    .e{margin-left:23px}</style>
    <fit-line class="r" w="219">Map data ©2017 Google</fit-line><fit-line class="t" w="124">Terms of Use</fit-line><fit-line class="r e" w="168">Report a map error</fit-line>`;
  }
}

class ResultMap extends HTMLElement{
  connectedCallback(){
    this.attachShadow({mode:'open'}).innerHTML=`<style>
    :host{display:block;position:relative;width:1200px;height:600px;overflow:hidden}
    map-type{position:absolute;left:20px;top:20px}
    .full{position:absolute;right:28px;top:20px;background:#fff;border-radius:2px}
    map-tools{position:absolute;right:20px;top:366px}
    map-credits{position:absolute;right:1px;bottom:0}</style>
    <map-canvas></map-canvas><map-type></map-type>
    <svg class="full" width="50" height="50" viewBox="0 0 50 50"><path fill="none" stroke="#737373" stroke-width="4.500" d="M12.200 20V12.200H20M30 12.200H37.800V20M37.800 30V37.800H30M20 37.800H12.200V30"/></svg>
    <map-tools></map-tools><map-credits></map-credits>`;
  }
}

class NashApp extends HTMLElement{
  connectedCallback(){
    this.attachShadow({mode:'open'}).innerHTML=`<style>
    :host{display:block;box-sizing:border-box;height:1368px;background:#1e1e1e;color:#fdf5e6}
    header{display:flex;justify-content:space-between;align-items:flex-start;box-sizing:border-box;height:220px;padding:57px 316px 0 170px}
    main{display:flex;flex-direction:column;align-items:center;padding-right:20px}
    h1,h2{margin:0;font-family:"DejaVu Serif",serif;font-weight:400;-webkit-text-stroke:1.9px #fdf5e6}
    h1{font-size:63px;line-height:72px;margin-right:1px}
    h2{font-size:40px;line-height:48px;margin-top:18px;margin-right:1px;-webkit-text-stroke-width:1.3px}
    result-map{margin-top:48px}
    .actions{display:flex;gap:10px;margin:50px 20px 0 0}
    .play{width:180px}.see{width:190px}</style>
    <header><site-logo></site-logo><site-nav></site-nav></header>
    <main><h1><fit-line w="429">Your score: 25</fit-line></h1><h2><fit-line w="603">Good try! Better luck next time.</fit-line></h2>
    <result-map></result-map>
    <div class="actions"><action-button class="play">Play again</action-button><action-button class="see">See details</action-button></div></main>`;
  }
}
customElements.define('fit-line',FitLine);
customElements.define('site-logo',SiteLogo);
customElements.define('site-nav',SiteNav);
customElements.define('action-button',ActionButton);
customElements.define('map-canvas',MapCanvas);
customElements.define('map-type',MapType);
customElements.define('map-tools',MapTools);
customElements.define('map-credits',MapCredits);
customElements.define('result-map',ResultMap);
customElements.define('nash-app',NashApp);
</script>
</body>
</html>
